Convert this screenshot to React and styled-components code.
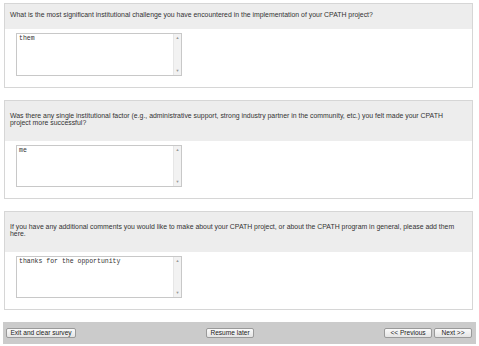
import React from "react";
import styled, { createGlobalStyle } from "styled-components";

const Global = createGlobalStyle`
  html, body { margin: 0; padding: 0; background: #ffffff; }
  body { font-family: "Liberation Sans", Arial, sans-serif; }
`;

const Page = styled.div`
  width: 479px;
  height: 346px;
  box-sizing: border-box;
  padding: 3px 6px 0 4px;
  display: flex;
  flex-direction: column;
  gap: 12px;
  overflow: hidden;
`;

const Panel = styled.section`
  border: 1px solid #d6d6d6;
  background: #fff;
  padding-bottom: 11px;
`;

const Question = styled.div`
  background: #ededed;
  color: #333;
  font-size: 6.9px;
  line-height: 7px;
  padding: ${(p) => p.$pt}px 12px ${(p) => p.$pb}px 5px;
`;

const Box = styled.div`
  margin: 4px 0 0 11px;
  width: 166px;
  height: ${(p) => p.$h}px;
  box-sizing: border-box;
  border: 1px solid #c8c8c8;
  display: flex;
  background: #fff;
`;

const Text = styled.div`
  flex: 1;
  font-family: "Liberation Mono", "Courier New", monospace;
  font-size: 6.5px;
  line-height: 8px;
  color: #333;
  padding: 1px 2px;
`;

const Scroll = styled.div`
  width: 7px;
  background: #f2f2f2;
  border-left: 1px solid #e6e6e6;
  display: flex;
  flex-direction: column;
  justify-content: space-between;
  align-items: center;
  padding: 2px 0;
  color: #999;
  font-size: 4px;
  line-height: 4px;
`;

const Footer = styled.div`
  margin: 0 -3px 0 -1px;
  height: 22px;
  background: #cbcbcb;
  display: flex;
  align-items: center;
  padding: 0 4px 0 3px;
`;

const Button = styled.button`
  height: 10px;
  box-sizing: border-box;
  border: 1px solid #9a9a9a;
  border-radius: 2px;
  background: linear-gradient(#fafafa, #e4e4e4);
  font-family: "Liberation Sans", Arial, sans-serif;
  font-size: 6.6px;
  line-height: 8px;
  color: #222;
  padding: 0;
  width: ${(p) => p.$w}px;
  margin-left: ${(p) => p.$ml || 0}px;
  cursor: pointer;
`;

const Spacer = styled.div`
  flex: 1;
`;

const questions = [
  {
    q: "What is the most significant institutional challenge you have encountered in the implementation of your CPATH project?",
    a: "them",
    pt: 7,
    pb: 11,
    h: 43,
  },
  {
    q: "Was there any single institutional factor (e.g., administrative support, strong industry partner in the community, etc.) you felt made your CPATH project more successful?",
    a: "me",
    pt: 11,
    pb: 15,
    h: 42,
  },
  {
    q: "If you have any additional comments you would like to make about your CPATH project, or about the CPATH program in general, please add them here.",
    a: "thanks for the opportunity",
    pt: 11,
    pb: 15,
    h: 42,
  },
];

export default function App() {
  return (
    <>
      <Global />
      <Page>
        {questions.map((item, i) => (
          <Panel key={i}>
            <Question $pt={item.pt} $pb={item.pb}>{item.q}</Question>
            <Box $h={item.h}>
              <Text>{item.a}</Text>
              <Scroll>
                <span>▲</span>
                <span>▼</span>
              </Scroll>
            </Box>
          </Panel>
        ))}
        <Footer>
          <Button $w={70}>Exit and clear survey</Button>
          <Spacer />
          <Button $w={48}>Resume later</Button>
          <Spacer />
          <Button $w={48}>&lt;&lt; Previous</Button>
          <Button $w={38} $ml={2}>Next &gt;&gt;</Button>
        </Footer>
      </Page>
    </>
  );
}
